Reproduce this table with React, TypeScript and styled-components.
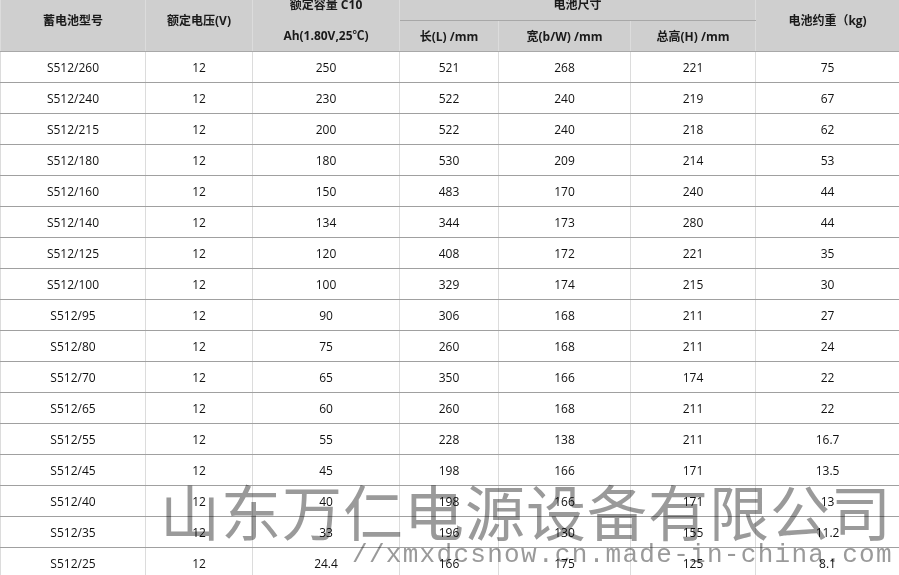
import React from "react";
import styled, { createGlobalStyle } from "styled-components";

const GlobalStyle = createGlobalStyle`
  html, body {
    margin: 0;
    padding: 0;
    background: #ffffff;
    overflow: hidden;
  }
  body {
    font-family: "Open Sans", "Noto Sans CJK SC", sans-serif;
  }
`;

const Page = styled.div`
  position: relative;
  width: 899px;
  height: 575px;
  overflow: hidden;
`;

const Table = styled.table`
  width: 899px;
  margin-top: -11px;
  border-collapse: collapse;
  table-layout: fixed;
  font-size: 12px;
  color: #111;
`;

const HeadCell = styled.th<{ $lines?: boolean }>`
  background: #cfcfcf;
  font-weight: 700;
  font-family: "Open Sans", "Noto Sans CJK SC", sans-serif;
  font-size: 12px;
  color: #1a1a1a;
  padding: 0;
  height: 30px;
  line-height: ${(p) => (p.$lines ? "31px" : "normal")};
  border-left: 1px solid #dcdcdc;
  border-right: 1px solid #dcdcdc;
  border-bottom: 1px solid #a8a8a8;
  text-align: center;
`;

const Row = styled.tr`
  height: 31px;
`;

const Cell = styled.td`
  padding: 0;
  height: 30px;
  text-align: center;
  border-left: 1px solid #dcdcdc;
  border-right: 1px solid #dcdcdc;
  border-bottom: 1px solid #a0a0a0;
`;

const Watermark = styled.div`
  position: absolute;
  left: 160px;
  top: 470px;
  pointer-events: none;
  mix-blend-mode: multiply;
  color: #9a9a9a;
`;

const MarkTitle = styled.div`
  font-family: "Noto Sans CJK SC", sans-serif;
  font-weight: 400;
  font-size: 60px;
  line-height: 80px;
  letter-spacing: 1px;
  white-space: nowrap;
`;

const MarkUrl = styled.div`
  margin-left: 192px;
  margin-top: -8px;
  font-family: "Liberation Mono", monospace;
  font-size: 26px;
  line-height: 26px;
  letter-spacing: 1.3px;
  white-space: nowrap;
`;

const rows: string[][] = [
  ["S512/260", "12", "250", "521", "268", "221", "75"],
  ["S512/240", "12", "230", "522", "240", "219", "67"],
  ["S512/215", "12", "200", "522", "240", "218", "62"],
  ["S512/180", "12", "180", "530", "209", "214", "53"],
  ["S512/160", "12", "150", "483", "170", "240", "44"],
  ["S512/140", "12", "134", "344", "173", "280", "44"],
  ["S512/125", "12", "120", "408", "172", "221", "35"],
  ["S512/100", "12", "100", "329", "174", "215", "30"],
  ["S512/95", "12", "90", "306", "168", "211", "27"],
  ["S512/80", "12", "75", "260", "168", "211", "24"],
  ["S512/70", "12", "65", "350", "166", "174", "22"],
  ["S512/65", "12", "60", "260", "168", "211", "22"],
  ["S512/55", "12", "55", "228", "138", "211", "16.7"],
  ["S512/45", "12", "45", "198", "166", "171", "13.5"],
  ["S512/40", "12", "40", "198", "166", "171", "13"],
  ["S512/35", "12", "33", "196", "130", "155", "11.2"],
  ["S512/25", "12", "24.4", "166", "175", "125", "8.1"],
];

const widths = [145, 107, 147, 99, 132, 125, 144];

export default function App() {
  return (
    <Page>
      <GlobalStyle />
      <Table>
        <colgroup>
          {widths.map((w, i) => (
            <col key={i} style={{ width: w }} />
          ))}
        </colgroup>
        <thead>
          <Row>
            <HeadCell rowSpan={2}>蓄电池型号</HeadCell>
            <HeadCell rowSpan={2}>额定电压(V)</HeadCell>
            <HeadCell rowSpan={2} $lines>
              额定容量 C10
              <br />
              Ah(1.80V,25℃)
            </HeadCell>
            <HeadCell colSpan={3}>电池尺寸</HeadCell>
            <HeadCell rowSpan={2}>电池约重（kg)</HeadCell>
          </Row>
          <Row>
            <HeadCell>长(L) /mm</HeadCell>
            <HeadCell>宽(b/W) /mm</HeadCell>
            <HeadCell>总高(H) /mm</HeadCell>
          </Row>
        </thead>
        <tbody>
          {rows.map((r) => (
            <Row key={r[0]}>
              {r.map((v, i) => (
                <Cell key={i}>{v}</Cell>
              ))}
            </Row>
          ))}
        </tbody>
      </Table>
      <Watermark>
        <MarkTitle>山东万仁电源设备有限公司</MarkTitle>
        <MarkUrl>//xmxdcsnow.cn.made-in-china.com</MarkUrl>
      </Watermark>
    </Page>
  );
}
